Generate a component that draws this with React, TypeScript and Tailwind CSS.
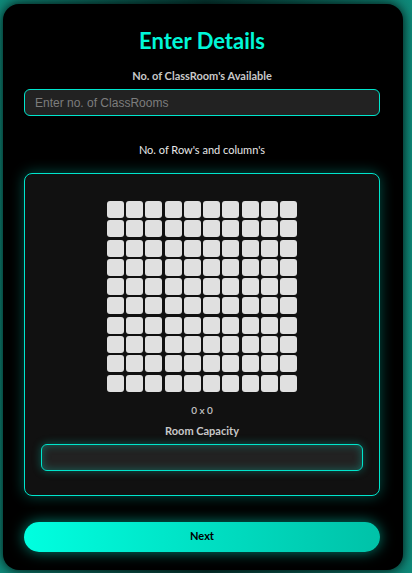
import React, { useState } from 'react';

const ROWS = 10;
const COLS = 10;

const App: React.FC = () => {
  const [rooms, setRooms] = useState('');
  const [capacity, setCapacity] = useState('');
  const [selected] = useState({ r: 0, c: 0 });

  return (
    <div className="min-h-[573px] w-[412px] bg-gradient-to-r from-[#0f8a7a] via-[#063b35] to-[#0f8a7a] pl-[3px] pt-[4px] font-['Lato',sans-serif]">
      <div className="flex h-[566px] w-[400px] flex-col items-center rounded-[16px] bg-black pl-[21px] pr-[23px] pt-[22px] shadow-[0_0_12px_rgba(0,0,0,0.9)]">
        <h1 className="text-[22px] font-bold leading-[30px] text-[#00f7d8]">Enter Details</h1>

        <label className="mt-[13px] text-[11px] font-bold leading-[14px] text-[#c8c8c8]">
          No. of ClassRoom's Available
        </label>
        <input
          value={rooms}
          onChange={(e) => setRooms(e.target.value)}
          placeholder="Enter no. of ClassRooms"
          className="mt-[6px] h-[27px] w-full rounded-[6px] border border-[#00e5cc] bg-[#222222] px-[10px] font-['Liberation_Sans',sans-serif] text-[12px] text-white outline-none placeholder:text-[#7d7d7d]"
        />

        <p className="mt-[27px] text-[11px] leading-[14px] text-[#e8e8e8]">No. of Row's and column's</p>

        <div className="mt-[16px] flex w-full flex-col items-center rounded-[8px] border border-[#00e5cc] bg-[#111111] pt-[27px] pb-[24px] shadow-[0_0_14px_rgba(0,229,204,0.35)]">
          <div className="grid grid-cols-[repeat(10,17px)] gap-[2.3px]">
            {Array.from({ length: ROWS * COLS }).map((_, i) => (
              <div key={i} className="h-[17px] w-[17px] rounded-[3px] bg-[#e0e0e0]" />
            ))}
          </div>
          <p className="mt-[11px] text-[10px] font-semibold leading-[14px] text-[#c4c4c4]">
            {selected.r} x {selected.c}
          </p>
          <p className="mt-[7px] text-[11px] font-bold leading-[14px] text-[#c8c8c8]">Room Capacity</p>
          <input
            value={capacity}
            onChange={(e) => setCapacity(e.target.value)}
            className="mt-[6px] h-[27px] w-[322px] rounded-[6px] border border-[#00e5cc] bg-[#222222] px-[10px] text-[12px] text-white shadow-[inset_0_0_8px_rgba(0,229,204,0.35),0_0_8px_rgba(0,229,204,0.35)] outline-none"
          />
        </div>

        <button className="mt-[26px] h-[30px] w-full rounded-full bg-gradient-to-r from-[#00ffe0] to-[#00c2a8] text-[11px] font-bold text-black shadow-[0_0_14px_rgba(0,255,224,0.5)]">
          Next
        </button>
      </div>
    </div>
  );
};

export default App;
